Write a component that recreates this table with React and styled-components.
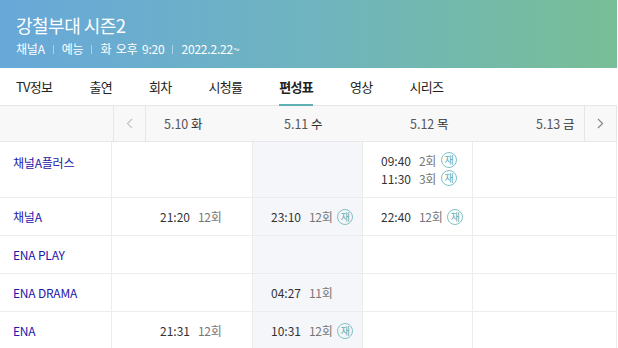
import React from 'react';
import styled, { createGlobalStyle } from 'styled-components';

const GlobalStyle = createGlobalStyle`
  body {
    margin: 0;
    background: #fff;
    font-family: "Noto Sans CJK KR", "Noto Sans", sans-serif;
  }
`;

const tabs = ['TV정보', '출연', '회차', '시청률', '편성표', '영상', '시리즈'];
const dates = [
  { d: '5.10', w: '화', width: 120 },
  { d: '5.11', w: '수', width: 126 },
  { d: '5.12', w: '목', width: 126 },
  { d: '5.13', w: '금', width: 60 },
];

const rows = [
  {
    channel: '채널A플러스',
    tall: true,
    cells: [[], [], [{ t: '09:40', ep: '2회', re: true }, { t: '11:30', ep: '3회', re: true }], []],
  },
  {
    channel: '채널A',
    cells: [[{ t: '21:20', ep: '12회' }], [{ t: '23:10', ep: '12회', re: true }], [{ t: '22:40', ep: '12회', re: true }], []],
  },
  { channel: 'ENA PLAY', cells: [[], [], [], []] },
  { channel: 'ENA DRAMA', cells: [[], [{ t: '04:27', ep: '11회' }], [], []] },
  {
    channel: 'ENA',
    cells: [[{ t: '21:31', ep: '12회' }], [{ t: '10:31', ep: '12회', re: true }], [], []],
  },
];

function Chevron({ dir }) {
  return (
    <svg width="7" height="11" viewBox="0 0 7 11">
      <path
        d={dir === 'left' ? 'M6 1 L1.5 5.5 L6 10' : 'M1 1 L5.5 5.5 L1 10'}
        fill="none"
        stroke={dir === 'left' ? '#c4c4c4' : '#888'}
        strokeWidth="1.2"
      />
    </svg>
  );
}

function App() {
  return (
    <Page>
      <GlobalStyle />
      <Header>
        <Title>강철부대 시즌2</Title>
        <Meta>
          <span>채널A</span>
          <Bar />
          <span>예능</span>
          <Bar />
          <span>화 오후 9:20</span>
          <Bar />
          <span>2022.2.22~</span>
        </Meta>
      </Header>

      <TabBar>
        {tabs.map((t) => (
          <Tab key={t} $active={t === '편성표'}>{t}</Tab>
        ))}
      </TabBar>

      <DateRow>
        <DateBlank />
        <NavButton $side="left"><Chevron dir="left" /></NavButton>
        <DateList>
          {dates.map((x) => (
            <DateItem key={x.d} style={{ width: x.width }}>
              {x.d} <Weekday>{x.w}</Weekday>
            </DateItem>
          ))}
        </DateList>
        <NavButton $side="right"><Chevron dir="right" /></NavButton>
      </DateRow>

      <Grid>
        {rows.map((r) => (
          <React.Fragment key={r.channel}>
            <ChannelCell $tall={r.tall}>{r.channel}</ChannelCell>
            {r.cells.map((items, i) => (
              <Cell key={i} $tall={r.tall} $today={i === 1} $first={i === 0}>
                {items.map((it) => (
                  <Show key={it.t}>
                    <Time>{it.t}</Time>
                    <Ep>{it.ep}</Ep>
                    {it.re && <Rerun>재</Rerun>}
                  </Show>
                ))}
              </Cell>
            ))}
          </React.Fragment>
        ))}
      </Grid>
    </Page>
  );
}

export default App;

const Page = styled.div`
  width: 617px;
  height: 348px;
  overflow: hidden;
`;

const Header = styled.div`
  height: 68px;
  box-sizing: border-box;
  padding: 12px 16px 0;
  background: linear-gradient(90deg, #67a8d9 0%, #6fb4c0 50%, #78be96 100%);
  color: #fff;
`;

const Title = styled.div`
  font-size: 18px;
  line-height: 26px;
  letter-spacing: -0.5px;
`;

const Meta = styled.div`
  display: flex;
  align-items: center;
  margin-top: 3px;
  font-size: 12px;
  line-height: 16px;
  letter-spacing: -0.2px;
  word-spacing: 2px;
`;

const Bar = styled.i`
  width: 1px;
  height: 9px;
  margin: 0 8px;
  background: rgba(255, 255, 255, 0.45);
`;

const TabBar = styled.div`
  display: flex;
  gap: 37px;
  height: 38px;
  box-sizing: border-box;
  padding-left: 16px;
  border-bottom: 1px solid #e6e6e6;
`;

const Tab = styled.div`
  position: relative;
  display: flex;
  align-items: center;
  font-size: 13px;
  letter-spacing: -0.7px;
  color: #222;
  font-weight: ${(p) => (p.$active ? 700 : 400)};

  &::after {
    content: '';
    display: ${(p) => (p.$active ? 'block' : 'none')};
    position: absolute;
    left: 0;
    right: 0;
    bottom: -1px;
    height: 2px;
    background: #5fb1b3;
  }
`;

const DateRow = styled.div`
  display: flex;
  height: 36px;
  box-sizing: border-box;
  background: #f8f8f8;
  border-bottom: 1px solid #e8e8e8;
`;

const DateBlank = styled.div`
  flex: 0 0 113px;
  border-right: 1px solid #e6e6e6;
`;

const NavButton = styled.div`
  flex: 0 0 31px;
  display: flex;
  align-items: center;
  justify-content: center;
  border-left: ${(p) => (p.$side === 'right' ? '1px solid #e6e6e6' : 'none')};
  border-right: 1px solid #e6e6e6;
`;

const DateList = styled.div`
  flex: 1;
  min-width: 0;
  overflow: hidden;
  display: flex;
  align-items: center;
  padding-left: 18px;
`;

const DateItem = styled.div`
  flex-shrink: 0;
  font-size: 12.5px;
  color: #555;
  white-space: nowrap;
`;

const Weekday = styled.span`
  color: #333;
`;

const Grid = styled.div`
  display: grid;
  grid-template-columns: 112px 141px 110px 110px 144px;
  grid-template-rows: 56px repeat(4, 38px);
`;

const ChannelCell = styled.div`
  box-sizing: border-box;
  display: flex;
  align-items: ${(p) => (p.$tall ? 'flex-start' : 'center')};
  padding: ${(p) => (p.$tall ? '12px 0 0 13px' : '0 0 0 13px')};
  border-right: 1px solid #ececec;
  border-bottom: 1px solid #ececec;
  font-size: 12px;
  color: #2416a8;
  letter-spacing: -0.2px;
`;

const Cell = styled.div`
  box-sizing: border-box;
  display: flex;
  flex-direction: column;
  justify-content: ${(p) => (p.$tall ? 'flex-start' : 'center')};
  padding-top: ${(p) => (p.$tall ? '9px' : '0')};
  padding-left: ${(p) => (p.$first ? '48px' : '18px')};
  border-right: 1px solid #ececec;
  border-bottom: 1px solid #ececec;
  background: ${(p) => (p.$today ? '#f5f6fa' : '#fff')};
`;

const Show = styled.div`
  display: flex;
  align-items: center;
  height: 18px;
  font-size: 12px;
  white-space: nowrap;
`;

const Time = styled.span`
  color: #333;
  margin-right: 8px;
`;

const Ep = styled.span`
  color: #777;
  letter-spacing: -0.3px;
`;

const Rerun = styled.span`
  display: inline-flex;
  align-items: center;
  justify-content: center;
  box-sizing: border-box;
  width: 16px;
  height: 16px;
  margin-left: 5px;
  border: 1px solid #7fc3c4;
  border-radius: 50%;
  font-size: 10px;
  line-height: 1;
  color: #5aaeb0;
`;
